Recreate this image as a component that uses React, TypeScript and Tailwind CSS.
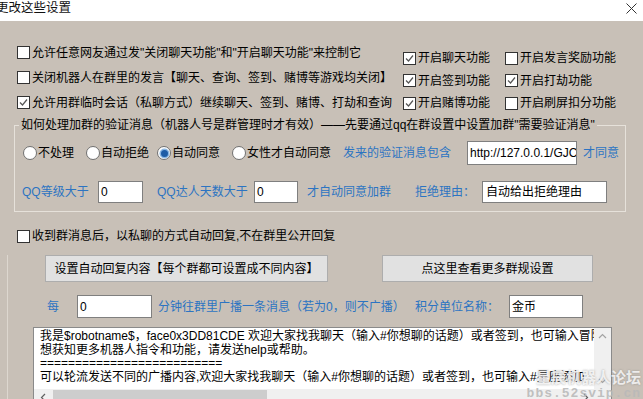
import React from 'react'

const blue = 'text-[#2c74c2]'

function Box({ checked }: { checked?: boolean }) {
  return (
    <span className="w-[13px] h-[13px] shrink-0 border border-[#333] bg-white flex items-center justify-center">
      {checked && (
        <svg width="9" height="9" viewBox="0 0 9 9">
          <path d="M1 4.5 L3.5 7 L8 1.5" fill="none" stroke="#555" strokeWidth="1.2" />
        </svg>
      )}
    </span>
  )
}

function Check({ checked, label, className = '' }: { checked?: boolean; label: string; className?: string }) {
  return (
    <div className={`flex items-center gap-[2px] whitespace-nowrap ${className}`}>
      <Box checked={checked} />
      <span>{label}</span>
    </div>
  )
}

function Radio({ on, label, className = '' }: { on?: boolean; label: string; className?: string }) {
  return (
    <div className={`flex items-center gap-[1px] whitespace-nowrap ${className}`}>
      <span className="w-[14px] h-[14px] rounded-full border border-[#707070] bg-white flex items-center justify-center shrink-0">
        {on && <span className="w-[7px] h-[7px] rounded-full bg-[#1d5ca6] ring-[1.5px] ring-[#8ab6e2]" />}
      </span>
      <span>{label}</span>
    </div>
  )
}

function Field({ value, className = '' }: { value: string; className?: string }) {
  return (
    <div className={`h-full bg-white border border-[#7f7f7f] pl-[2px] flex items-center whitespace-nowrap overflow-hidden shrink-0 ${className}`}>
      {value}
    </div>
  )
}

export default function App() {
  return (
    <div className="relative w-[643px] h-[399px] overflow-hidden bg-[#c8c0b7] text-[12px] text-black font-['Liberation_Sans','Noto_Sans_CJK_SC',sans-serif]">
      {/* title bar */}
      <div className="h-[21px] bg-white flex items-start justify-between">
        <span className="ml-[-4px] text-[12.5px] leading-[17px] text-[#111]">更改这些设置</span>
        <svg className="mt-[3px] mr-[6px]" width="11" height="11" viewBox="0 0 11 11">
          <path d="M0.5 0.5 L10.5 10.5 M10.5 0.5 L0.5 10.5" stroke="#333" strokeWidth="1" />
        </svg>
      </div>

      {/* top checkboxes */}
      <div className="flex">
        <div className="ml-[17px] w-[386px] pt-[19px] flex flex-col">
          <Check className="h-[25px]" label={'允许任意网友通过发"关闭聊天功能"和"开启聊天功能"来控制它'} />
          <Check className="h-[25px]" label="关闭机器人在群里的发言【聊天、查询、签到、赌博等游戏均关闭】" />
          <Check className="h-[25px]" checked label="允许用群临时会话（私聊方式）继续聊天、签到、赌博、打劫和查询" />
        </div>
        <div className="pt-[26px] grid grid-cols-[102px_120px] auto-rows-[22.5px]">
          <Check checked label="开启聊天功能" />
          <Check label="开启发言奖励功能" />
          <Check checked label="开启签到功能" />
          <Check checked label="开启打劫功能" />
          <Check checked label="开启赌博功能" />
          <Check label="开启刷屏扣分功能" />
        </div>
      </div>

      {/* group box */}
      <fieldset className="mt-[3px] ml-[14px] w-[612px] border border-[#e6e1da] p-0 pb-[8px] m-0">
        <legend className="ml-[4px] px-[2px] leading-[14px] whitespace-nowrap">
          如何处理加群的验证消息（机器人号是群管理时才有效）——先要通过qq在群设置中设置加群"需要验证消息"
        </legend>
        <div className="mt-[9px] h-[24px] flex items-center">
          <Radio className="ml-[8px] w-[63px]" label="不处理" />
          <Radio className="w-[71px]" label="自动拒绝" />
          <Radio className="w-[75px]" on label="自动同意" />
          <Radio className="w-[111px]" label="女性才自动同意" />
          <span className={`w-[124px] ${blue}`}>发来的验证消息包含</span>
          <Field className="w-[110px]" value="http://127.0.0.1/GJC" />
          <span className={`ml-[6px] ${blue}`}>才同意</span>
        </div>
        <div className="mt-[16px] h-[22px] flex items-center whitespace-nowrap">
          <span className={`ml-[7px] w-[76px] ${blue}`}>QQ等级大于</span>
          <Field className="w-[45px]" value="0" />
          <span className={`ml-[14px] w-[97px] ${blue}`}>QQ达人天数大于</span>
          <Field className="w-[44px]" value="0" />
          <span className={`ml-[9px] w-[108px] ${blue}`}>才自动同意加群</span>
          <span className={`w-[67px] ${blue}`}>拒绝理由：</span>
          <Field className="w-[125px] pl-[3px]" value="自动给出拒绝理由" />
        </div>
      </fieldset>

      <Check className="mt-[12px] ml-[17px] h-[24px]" label="收到群消息后，以私聊的方式自动回复,不在群里公开回复" />

      {/* lower panel */}
      <div className="mt-[7px] ml-[7px] border-l border-[#ddd7cf] pb-[20px]">
        <div className="h-[27px] flex">
          <button className="ml-[37px] w-[283px] h-full bg-[#e1e1e1] border border-[#adadad] whitespace-nowrap">
            设置自动回复内容【每个群都可设置成不同内容】
          </button>
          <button className="ml-[54px] w-[211px] h-full bg-[#e1e1e1] border border-[#adadad] whitespace-nowrap">
            点这里查看更多群规设置
          </button>
        </div>

        <div className="mt-[13px] h-[23px] flex items-center whitespace-nowrap">
          <span className={`ml-[39px] w-[30px] ${blue}`}>每</span>
          <Field className="w-[75px]" value="0" />
          <span className={`ml-[6px] w-[257px] ${blue}`}>分钟往群里广播一条消息（若为0，则不广播）</span>
          <span className={`w-[94px] ${blue}`}>积分单位名称：</span>
          <Field className="w-[74px]" value="金币" />
        </div>

        {/* text area */}
        <div className="mt-[9px] ml-[25px] w-[579px] h-[80px] bg-white border border-[#8a8a8a] flex flex-col">
          <div className="h-[61px] flex">
            <div className="flex-1 overflow-hidden whitespace-nowrap pl-[6px] pt-[2px] leading-[13.5px]">
              <div>我是$robotname$，face0x3DD81CDE 欢迎大家找我聊天（输入#你想聊的话题）或者签到，也可输入冒险游戏</div>
              <div>想获知更多机器人指令和功能，请发送help或帮助。</div>
              <div>==========================</div>
              <div>可以轮流发送不同的广播内容,欢迎大家找我聊天（输入#你想聊的话题）或者签到，也可输入#星座添加</div>
            </div>
            <div className="w-[17px] bg-[#f0f0f0] flex flex-col justify-between items-center">
              <svg className="mt-[5px]" width="9" height="6" viewBox="0 0 9 6">
                <path d="M1 5 L4.5 1.5 L8 5" fill="none" stroke="#a3a3a3" strokeWidth="1.2" />
              </svg>
              <svg className="mb-[5px]" width="9" height="6" viewBox="0 0 9 6">
                <path d="M1 1 L4.5 4.5 L8 1" fill="none" stroke="#a3a3a3" strokeWidth="1.2" />
              </svg>
            </div>
          </div>
          <div className="h-[17px] flex bg-[#f0f0f0]">
            <div className="w-[17px] flex items-center justify-center">
              <svg width="6" height="9" viewBox="0 0 6 9">
                <path d="M5 1 L1.5 4.5 L5 8" fill="none" stroke="#606060" strokeWidth="1.2" />
              </svg>
            </div>
            <div className="flex-1 flex py-[1px]">
              <div className="ml-[2px] w-[214px] bg-[#cdcdcd]" />
            </div>
            <div className="w-[17px] flex items-center justify-center">
              <svg width="6" height="9" viewBox="0 0 6 9">
                <path d="M1 1 L4.5 4.5 L1 8" fill="none" stroke="#606060" strokeWidth="1.2" />
              </svg>
            </div>
            <div className="w-[17px]" />
          </div>
        </div>
      </div>

      {/* watermark */}
      <div className="absolute right-[2px] bottom-[-2px] flex flex-col items-end pointer-events-none">
        <span className="text-[15px] font-bold leading-[17px] text-white/80 [text-shadow:0_0_2px_rgba(120,120,120,0.7)]">星辰机器人论坛</span>
        <span className="text-[13px] leading-[15px] tracking-[1px] text-[#b9b9b9]/90 font-['Liberation_Mono',monospace] font-bold">bbs.52svip.cn</span>
      </div>
    </div>
  )
}
